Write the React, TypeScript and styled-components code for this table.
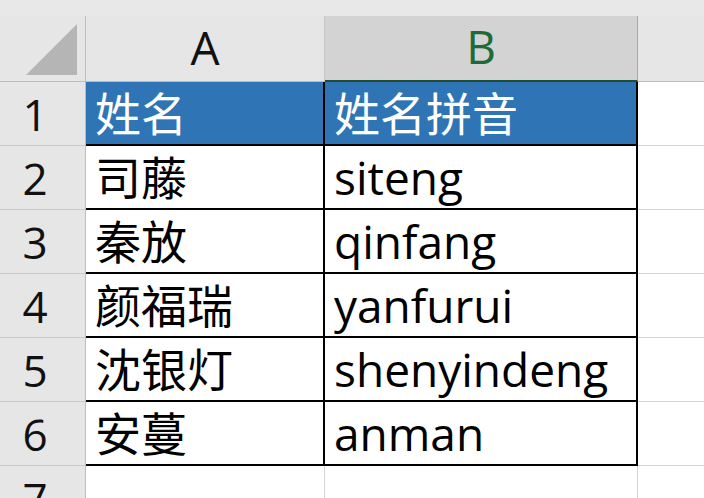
import React from "react";
import styled, { createGlobalStyle, css } from "styled-components";

const Global = createGlobalStyle`
  html, body { margin: 0; padding: 0; background: #ffffff; }
  body { width: 704px; height: 498px; overflow: hidden; }
`;

const Sheet = styled.div`
  width: 704px;
  height: 498px;
  overflow: hidden;
  background: #ffffff;
  font-family: "Open Sans", "Noto Sans CJK SC", sans-serif;
  display: grid;
  grid-template-columns: 86px 239px 313px 1fr;
  grid-template-rows: 16px 66px repeat(7, 64px);
`;

const TopStrip = styled.div`
  grid-column: 1 / -1;
  background: #e8e8e8;
`;

const Corner = styled.div`
  background: #e6e6e6;
  border-right: 1px solid #bdbdbd;
  border-bottom: 1px solid #bdbdbd;
  box-sizing: border-box;
  display: flex;
  align-items: flex-end;
  justify-content: flex-end;
  padding: 0 7px 5px 0;
`;

const ColHead = styled.div<{ $selected?: boolean; $last?: boolean }>`
  box-sizing: border-box;
  background: ${(p) => (p.$selected ? "#d3d3d3" : "#e6e6e6")};
  border-right: ${(p) => (p.$last ? "none" : p.$selected ? "1px solid #a9a9a9" : "1px solid #c8c8c8")};
  border-bottom: ${(p) => (p.$selected ? "2px solid #1f4d33" : "1px solid #bdbdbd")};
  color: ${(p) => (p.$selected ? "#1e6b38" : "#111111")};
  font-size: 46px;
  line-height: 1;
  display: flex;
  align-items: center;
  justify-content: center;
  padding-bottom: 4px;
`;

const RowHead = styled.div`
  box-sizing: border-box;
  background: #e6e6e6;
  border-right: 1px solid #bdbdbd;
  border-bottom: 1px solid #c8c8c8;
  font-size: 44px;
  color: #111111;
  display: flex;
  align-items: center;
  justify-content: center;
  padding-right: 15px;
  line-height: 1;
`;

const Cell = styled.div<{ $head?: boolean; $boxed?: boolean }>`
  box-sizing: border-box;
  font-size: 46px;
  line-height: 1;
  display: flex;
  align-items: center;
  padding-left: 9px;
  white-space: nowrap;
  overflow: hidden;
  color: #000000;
  ${(p) =>
    p.$boxed
      ? css`
          border-right: 2px solid #000000;
          border-bottom: 2px solid #000000;
        `
      : css`
          border-right: 1px solid #d6d6d6;
          border-bottom: 1px solid #d6d6d6;
        `}
  ${(p) =>
    p.$head &&
    css`
      background: #2f75b5;
      color: #ffffff;
    `}
`;

const Empty = styled.div`
  box-sizing: border-box;
  border-bottom: 1px solid #d6d6d6;
`;

const rows: [string, string][] = [
  ["司藤", "siteng"],
  ["秦放", "qinfang"],
  ["颜福瑞", "yanfurui"],
  ["沈银灯", "shenyindeng"],
  ["安蔓", "anman"],
];

export default function App() {
  return (
    <>
      <Global />
      <Sheet>
        <TopStrip />
        <Corner>
          <svg width="52" height="52" viewBox="0 0 52 52">
            <polygon points="0,51 51,51 51,0" fill="#b5b5b5" />
          </svg>
        </Corner>
        <ColHead>A</ColHead>
        <ColHead $selected>B</ColHead>
        <ColHead $last />

        <RowHead>1</RowHead>
        <Cell $head $boxed>姓名</Cell>
        <Cell $head $boxed>姓名拼音</Cell>
        <Empty />

        {rows.map(([name, py], i) => (
          <React.Fragment key={name}>
            <RowHead>{i + 2}</RowHead>
            <Cell $boxed>{name}</Cell>
            <Cell $boxed>{py}</Cell>
            <Empty />
          </React.Fragment>
        ))}

        <RowHead>7</RowHead>
        <Cell />
        <Cell />
        <Empty />
      </Sheet>
    </>
  );
}
